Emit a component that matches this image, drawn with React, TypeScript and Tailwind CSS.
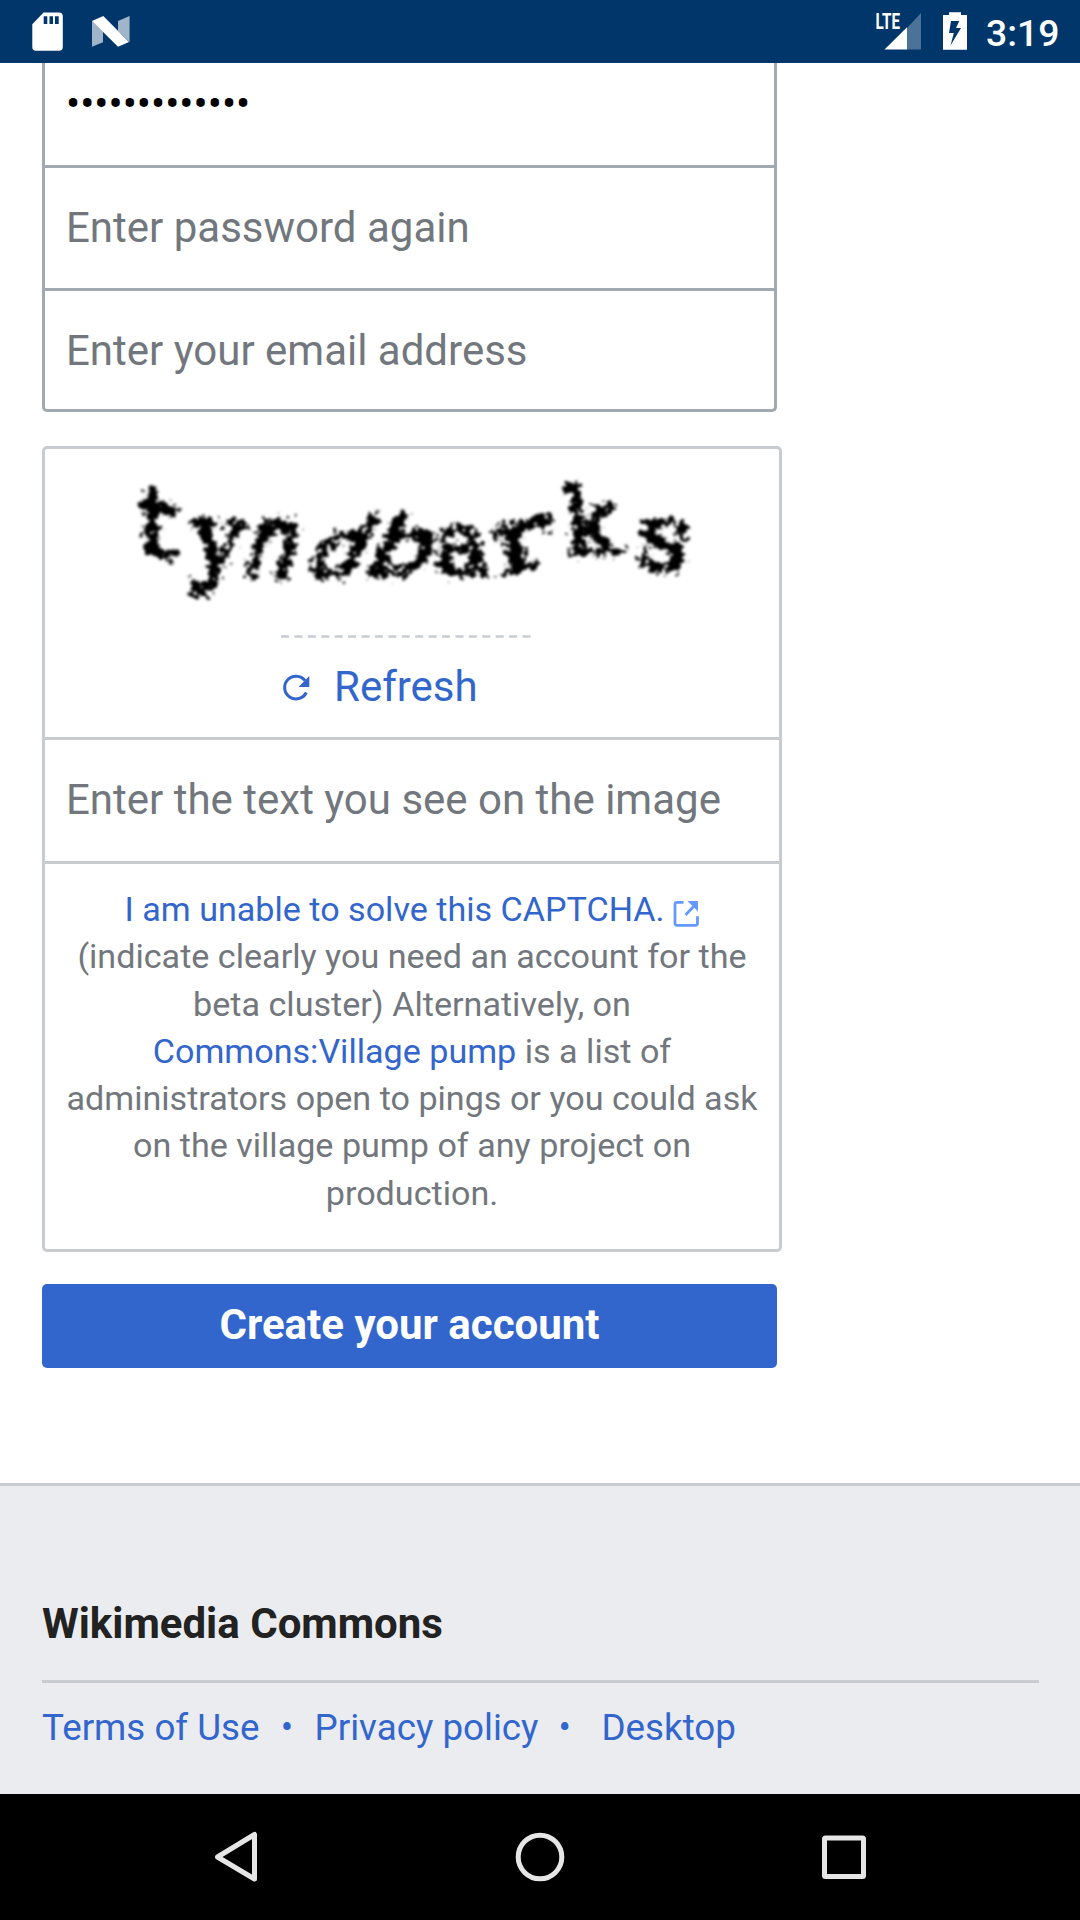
const serif = '"DejaVu Serif", serif';
const sans = '"DejaVu Sans", sans-serif';

const glyphs = [
  { c: "t", t: "translate(137 553) rotate(10) skewX(8) scale(1.05 1)", s: 94, f: sans },
  { c: "y", t: "translate(190 571) rotate(3) skewX(-2) scale(0.92 1)", s: 100, f: serif },
  { c: "n", t: "translate(239 577) rotate(2) skewX(-14) scale(0.8 1)", s: 104, f: sans },
  { c: "d", t: "translate(301 577) skewX(-26) scale(1.08 1)", s: 80, f: sans },
  { c: "b", t: "translate(359 577) rotate(-3) skewX(-28) scale(1.35 1)", s: 78, f: sans },
  { c: "a", t: "translate(435 575) skewX(4) scale(1.05 1)", s: 90, f: serif },
  { c: "r", t: "translate(499 577) rotate(-15) skewX(-4) scale(1.4 1)", s: 90, f: serif },
  { c: "k", t: "translate(566 555) rotate(-2) skewX(2) scale(0.96 1)", s: 92, f: serif },
  { c: "s", t: "translate(633 564) rotate(9) scale(1.15 1)", s: 92, f: serif },
];

function CaptchaImage() {
  return (
    <svg className="h-[160px] w-[620px]" viewBox="110 460 620 160" role="img" aria-label="CAPTCHA">
      <defs>
        <filter id="rough" x="110" y="460" width="620" height="160" filterUnits="userSpaceOnUse" colorInterpolationFilters="sRGB">
          <feTurbulence type="fractalNoise" baseFrequency="0.16" numOctaves="3" seed="11" result="n" />
          <feDisplacementMap in="SourceGraphic" in2="n" scale="21" xChannelSelector="R" yChannelSelector="G" />
          <feGaussianBlur stdDeviation="1.6" />
        </filter>
      </defs>
      <g filter="url(#rough)" fill="#000" stroke="#000" strokeWidth="3.5">
        {glyphs.map((g) => (
          <text key={g.c} transform={g.t} fontSize={g.s} fontFamily={g.f}>
            {g.c}
          </text>
        ))}
      </g>
    </svg>
  );
}

function StatusBar() {
  return (
    <header className="flex h-[63px] shrink-0 items-start bg-[#00366a] text-white">
      <svg className="h-[63px] w-[140px]" viewBox="0 0 140 63">
        <path fill="#fff" fillRule="evenodd" d="M43.5 12.5H59a3.8 3.8 0 0 1 3.8 3.8V47a3.8 3.8 0 0 1-3.8 3.8H36.1a3.8 3.8 0 0 1-3.8-3.8V24.2zM43.7 16.3V24h3.6v-7.7zm5.8 0V24H53v-7.7zm5.4 0V24h3.8v-7.7z" />
        <path fill="#a0b4ca" d="M92 21l11 10.5V42.300L92 46.800zM118 21l11.600-5V42L118 31z" />
        <path fill="#fff" d="M92 21l11.300-5L129 42l-11 4.800z" />
      </svg>
      <div className="flex-1" />
      <svg className="h-[63px] w-[104px]" viewBox="872 0 104 63">
        <path fill="#4d7298" d="M921 13v36.500h-14V28z" />
        <path fill="#fff" d="M907 27.300v22.200h-22.500z" />
        <text x="875.500" y="29" fill="#fff" fontSize="22" fontWeight="700" textLength="24.500" lengthAdjust="spacingAndGlyphs" style={{ fontFamily: "Roboto, sans-serif" }}>LTE</text>
        <path fill="#fff" fillRule="evenodd" d="M949 12.300h12V15h6v34.800h-24V15h6zM951 21l-2 12h4.800l-3.300 12.500 10.500-17.500h-5l3.300-7z" />
      </svg>
      <span className="w-[104px] pl-[10px] pt-[11px] font-[Roboto,sans-serif] text-[37.300px] leading-[44px] font-medium">3:19</span>
    </header>
  );
}

function NavBar() {
  return (
    <nav className="h-[126px] shrink-0 bg-black">
      <svg className="h-[126px] w-[1080px]" viewBox="0 1794 1080 126" fill="none" stroke="#e6e6e6" strokeWidth="5" strokeLinejoin="round">
        <path d="M254.500 1834.500v44.500L217.500 1857z" />
        <circle cx="540" cy="1857" r="21.800" />
        <rect x="824.500" y="1838" width="39" height="38.500" rx="1" />
      </svg>
    </nav>
  );
}

export default function App() {
  return (
    <div className="flex h-[1920px] w-[1080px] flex-col overflow-hidden bg-white font-[Roboto,sans-serif]">
      <StatusBar />
      <main className="flex h-[1420px] shrink-0 flex-col pl-[42px] text-[42px] text-[#72777d]">
        <section className="w-[735px] rounded-b-[5px] border-x-[3px] border-b-[3px] border-[#a2a9b1]">
          <div className="h-[105px] border-b-[3px] border-[#a2a9b1] pl-[21px] pt-[16px] leading-[49px] text-black">•••••••••••••</div>
          <div className="flex h-[123px] items-center border-b-[3px] border-[#a2a9b1] pb-[2px] pl-[21px]">Enter password again</div>
          <div className="flex h-[118px] items-center pl-[21px]">Enter your email address</div>
        </section>

        <section className="mt-[34px] h-[806px] w-[740px] rounded-[5px] border-[3px] border-[#c8ccd1]">
          <div className="flex h-[291px] flex-col border-b-[3px] border-[#c8ccd1]">
            <div className="mt-[11px] pl-[65px]">
              <CaptchaImage />
            </div>
            <svg className="mt-[13px] ml-[236px] h-[6px] w-[252px]" viewBox="281 633 252 6">
              <path d="M281 636.500h250" stroke="#c8ccd1" strokeWidth="2.600" strokeDasharray="8 5.420" />
            </svg>
            <div className="mt-[19px] ml-[237px] flex h-[56px] items-center text-[#3366cc]">
              <svg className="mt-[4px] h-[28px] w-[30px]" viewBox="282 674 30 28">
                <path d="M306.300 692.500A11.400 11.400 0 1 1 305 680.500" fill="none" stroke="#36c" strokeWidth="3" />
                <path d="M309.300 676v11h-10.800z" fill="#36c" />
              </svg>
              <span className="ml-[22px]">Refresh</span>
            </div>
          </div>
          <div className="flex h-[124px] items-center border-b-[3px] border-[#c8ccd1] pb-[2px] pl-[21px]">Enter the text you see on the image</div>
          <div className="pt-[22px] text-center text-[34.125px] leading-[47.250px] whitespace-nowrap">
            <div className="flex items-center justify-center text-[#3366cc]">
              I am unable to solve this CAPTCHA.
              <svg className="mt-[8px] ml-[8px] h-[28px] w-[27px]" viewBox="673 900 27 28" fill="none" stroke="#69f" strokeWidth="2.800">
                <path d="M683.500 902.300H677q-2 0-2 2v19q0 2 2 2h18.500q2 0 2-2v-7M685.500 915l9-9.500" />
                <path d="M687.500 901H698v10.500z" fill="#69f" stroke="none" />
              </svg>
            </div>
            <div>(indicate clearly you need an account for the</div>
            <div>beta cluster) Alternatively, on</div>
            <div><span className="text-[#3366cc]">Commons:Village pump</span> is a list of</div>
            <div>administrators open to pings or you could ask</div>
            <div>on the village pump of any project on</div>
            <div>production.</div>
          </div>
        </section>

        <button className="mt-[31.500px] h-[84px] w-[735px] shrink-0 rounded-[5px] bg-[#3366cc] pb-[2px] text-[42px] leading-none font-bold text-white">Create your account</button>
      </main>

      <footer className="flex h-[311px] shrink-0 flex-col border-t-[3px] border-[#c8ccd1] bg-[#eaecf0] px-[42px]">
        <h2 className="mt-[113px] text-[42px] leading-[50px] font-bold text-[#222222]">Wikimedia Commons</h2>
        <div className="mt-[31px] h-[3px] w-[997px] bg-[#c8ccd1]" />
        <div className="mt-[20px] flex text-[36.750px] leading-[50px] text-[#3366cc]">
          <span>Terms of Use</span>
          <span className="w-[55px] text-center">•</span>
          <span>Privacy policy</span>
          <span className="w-[63px] pl-[20px]">•</span>
          <span>Desktop</span>
        </div>
      </footer>
      <NavBar />
    </div>
  );
}
